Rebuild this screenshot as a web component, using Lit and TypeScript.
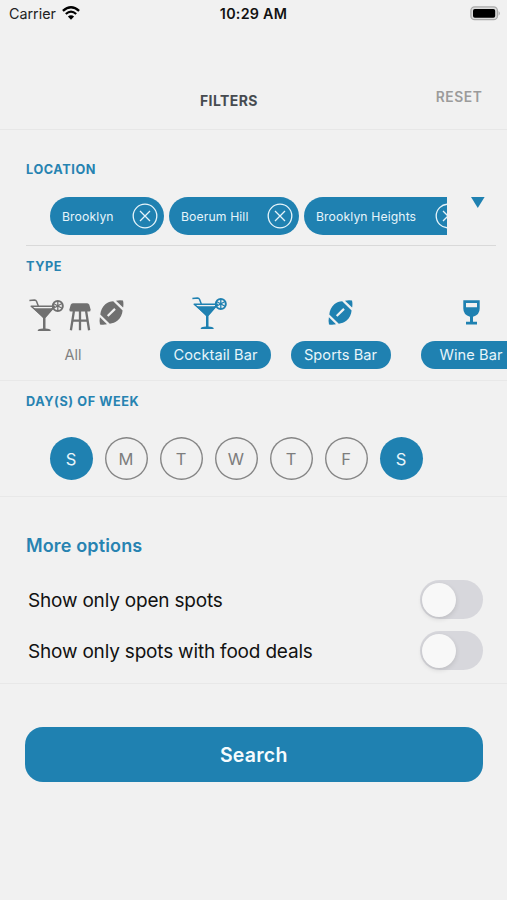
import { LitElement, html, css } from "lit";
import { customElement, property, state } from "lit/decorators.js";
import { classMap } from "lit/directives/class-map.js";

const cocktail = html`<svg class="icon" width="35" height="33" viewBox="0 0 35 33">
  <path d="M0.4 1.5 5.5 1Q7 1 7.6 2.5L9.3 7" fill="none" stroke="currentColor" stroke-width="1.5" />
  <path d="M2.2 7.2H25.4L15.3 18.5Z" fill="none" stroke="currentColor" stroke-width="1.5" stroke-linejoin="round" />
  <path d="M4 9.3H25L16.5 19V29.4Q20.8 29.7 21.6 31V32H8.8V31Q9.6 29.7 14 29.4V19Z" fill="currentColor" />
  <circle cx="28.8" cy="6.9" r="5" fill="none" stroke="currentColor" stroke-width="2" />
  <path d="M28.8 2V11.8M24.5 4.5 33 9.3M24.5 9.3 33 4.5" stroke="currentColor" stroke-width="1.3" />
</svg>`;

const football = html`<svg class="icon" width="25" height="25" viewBox="0 0 25 25">
  <path d="M17 0.7Q20.5 -0.1 24 0.5Q24.8 4 24.1 7.6Z" fill="currentColor" />
  <path d="M8 24.200Q4.500 25 1 24.400Q0.200 21 0.900 17.300Z" fill="currentColor" />
  <path d="M14.200 1.200 23.600 10.400C23.300 14 21.600 18 18.600 20.600C16.400 22.600 13.600 23.500 10.800 23.700L1.300 14.500C1.600 11 3.300 7 6.300 4.300C8.600 2.300 11.400 1.400 14.200 1.200Z" fill="currentColor" />
  <path d="M8.700 16 16 8.900" stroke="#f1f1f1" stroke-width="2.200" />
</svg>`;

const stool = html`<svg class="icon" width="22" height="28" viewBox="0 0 22 28">
  <path d="M3.800 0.200H18.200Q19.700 0.200 20.300 1.800L21.600 6.400Q21.800 8.600 20 8.600H2Q0.200 8.600 0.400 6.400L1.700 1.800Q2.300 0.200 3.800 0.200Z" fill="currentColor" />
  <path d="M4.900 8 1.900 27.300M17.100 8 20.100 27.300M11 8V27.300M3.600 17.700H18.400" fill="none" stroke="currentColor" stroke-width="2.300" />
</svg>`;

const wine = html`<svg class="icon" width="17" height="25" viewBox="0 0 17 25">
  <path fill-rule="evenodd" d="M0.300 0.300H16.700V8.500Q16.700 15 10 16.700V21.800H14V24.500H3V21.800H7V16.700Q0.300 15 0.300 8.500ZM3 3V7.200H14V3Z" fill="currentColor" />
</svg>`;

@customElement("location-chip")
class LocationChip extends LitElement {
  @property() label = "";

  static styles = css`
    :host {
      display: flex;
      flex: none;
      align-items: center;
      justify-content: space-between;
      box-sizing: border-box;
      height: 38px;
      padding: 0 6px 0 12px;
      border-radius: 19px;
      background: #1f81b1;
      color: #e6f4fa;
      font-size: 12.2px;
      letter-spacing: 0.12px;
    }
    .remove {
      display: block;
    }
  `;

  render() {
    return html`<span>${this.label}</span>
      <svg class="remove" width="26" height="26" viewBox="0 0 26 26" fill="none" stroke="currentColor" stroke-width="1.3">
        <circle cx="13" cy="13" r="11.800" />
        <path d="M8 8 18 18M18 8 8 18" />
      </svg>`;
  }
}

@customElement("toggle-switch")
class ToggleSwitch extends LitElement {
  @property({ type: Boolean }) on = false;

  static styles = css`
    .track {
      display: flex;
      box-sizing: border-box;
      width: 62.5px;
      height: 38.5px;
      padding: 2.25px;
      border-radius: 20px;
      background: #d7d7dc;
    }
    .track.on {
      justify-content: flex-end;
      background: #1f81b1;
    }
    .knob {
      width: 34px;
      height: 34px;
      border-radius: 50%;
      background: #f8f8f8;
      box-shadow: 0 2px 5px rgba(0, 0, 0, 0.12);
    }
  `;

  render() {
    return html`<div class=${classMap({ track: true, on: this.on })} @click=${() => (this.on = !this.on)}>
      <div class="knob"></div>
    </div>`;
  }
}

@customElement("app-root")
class AppRoot extends LitElement {
  @state() days = [true, false, false, false, false, false, true];

  static styles = css`
    :host {
      display: flex;
      flex-direction: column;
      box-sizing: border-box;
      width: 507px;
      height: 900px;
      overflow: hidden;
      background: #f1f1f1;
      color: #111;
      font-family: Inter, "Liberation Sans", sans-serif;
      white-space: nowrap;
    }
    .icon {
      display: block;
      flex: none;
    }
    .status {
      display: grid;
      grid-template-columns: 1fr auto 1fr;
      align-items: center;
      box-sizing: border-box;
      height: 28px;
      padding: 0 6px 2px 9px;
      font-size: 14.3px;
    }
    .carrier {
      display: flex;
      align-items: center;
      gap: 6px;
      color: #222;
    }
    .clock {
      margin-right: 3px;
      font-weight: 600;
      letter-spacing: 0.25px;
    }
    .battery {
      justify-self: end;
    }
    .header {
      display: flex;
      align-items: flex-start;
      justify-content: space-between;
      box-sizing: border-box;
      height: 102px;
      padding: 60px 24.5px 0 200px;
      border-bottom: 1px solid #e7e7e7;
      line-height: 18px;
    }
    .title {
      margin-top: 4px;
      font-size: 14px;
      font-weight: 700;
      letter-spacing: 0.4px;
      color: #464b50;
    }
    .reset {
      font-size: 13.8px;
      font-weight: 600;
      letter-spacing: 0.6px;
      color: #9b9b9b;
    }
    .section {
      box-sizing: border-box;
      border-bottom: 1px solid #e8e8e8;
    }
    .heading {
      margin-left: 26px;
      font-size: 12.7px;
      font-weight: 700;
      line-height: 18px;
      letter-spacing: 0.58px;
      color: #2783b1;
    }
    .location {
      height: 116px;
      padding-top: 31px;
      border: none;
    }
    .picker {
      display: flex;
      margin: 18px 11px 0 26px;
      padding: 0 12px 10px 24px;
      border-bottom: 1px solid #d9d9d9;
    }
    .chips {
      display: flex;
      flex: none;
      gap: 5px;
      width: 396.5px;
      overflow: hidden;
    }
    .first { width: 114px; }
    .second { width: 130px; }
    .third { width: 163px; }
    .arrow {
      margin-left: 24.5px;
    }
    .type {
      height: 135px;
      padding-top: 12px;
    }
    .types {
      display: flex;
      align-items: flex-start;
      overflow: hidden;
      padding-left: 29px;
      font-size: 14.6px;
      letter-spacing: 0.08px;
    }
    .kind {
      display: flex;
      flex: none;
      flex-direction: column;
      align-items: center;
      color: #1f81b1;
    }
    .all {
      width: 96px;
      align-items: flex-start;
      margin-right: 35px;
      color: #707070;
    }
    .art {
      display: flex;
      align-items: flex-start;
      height: 43.5px;
      margin-top: 21px;
      box-sizing: border-box;
    }
    .trio { padding-top: 2px; gap: 5px; }
    .trio .icon + .icon { margin-top: 3.500px; }
    .trio .icon + .icon + .icon { margin: 1px 0 0 3px; }
    .glass { margin-right: 12px; }
    .ball, .wine { padding-top: 3px; }
    .pill {
      box-sizing: border-box;
      height: 28.5px;
      border-radius: 14.25px;
      background: #1f81b1;
      color: #e8f5fa;
      line-height: 28px;
      text-align: center;
    }
    .w111 { width: 111px; }
    .w100 { width: 100px; }
    .sports { margin-left: 19.5px; }
    .winebar { margin-left: 30.5px; }
    .plain {
      align-self: center;
      margin-right: 8px;
      font-size: 14.4px;
      line-height: 28px;
      color: #808080;
    }
    .week {
      height: 116px;
      padding-top: 12px;
    }
    .days {
      display: flex;
      gap: 12px;
      margin: 26px 0 0 49.5px;
    }
    .day {
      display: flex;
      align-items: center;
      justify-content: center;
      box-sizing: border-box;
      width: 43px;
      height: 43px;
      border-radius: 50%;
      box-shadow: inset 0 0 0 1.4px #858585;
      font-size: 16.5px;
      color: #7d7d7d;
    }
    .day.on {
      box-shadow: none;
      background: #1f81b1;
      color: #e8f5fa;
    }
    .options {
      height: 187px;
      padding: 37px 24.5px 0 28px;
    }
    .more {
      margin: 0 0 22px -2px;
      font-size: 18px;
      font-weight: 600;
      line-height: 24px;
      letter-spacing: 0.15px;
      color: #2783b1;
    }
    .option {
      display: flex;
      align-items: center;
      justify-content: space-between;
      height: 39px;
      margin-bottom: 12px;
      font-size: 19px;
      letter-spacing: -0.19px;
    }
    .label {
      padding-top: 1px;
    }
    .search {
      flex: none;
      height: 55px;
      margin: 43px 24.5px 0 25px;
      border: none;
      padding: 0;
      border-radius: 18px;
      background: #1f81b1;
      color: #f5fbfd;
      font-family: inherit;
      font-size: 19.5px;
      font-weight: 600;
      letter-spacing: 0.25px;
    }
  `;

  toggleDay(index: number) {
    this.days = this.days.map((on, i) => (i === index ? !on : on));
  }

  render() {
    return html`
      <div class="status">
        <div class="carrier">
          <span>Carrier</span>
          <svg class="icon" width="18" height="14" viewBox="0 0 18 14" fill="none" stroke="#000">
            <path d="M0.900 4.800Q9 -2.200 17.100 4.800" stroke-width="2.400" />
            <path d="M3.800 8Q9 3.400 14.200 8" stroke-width="2.200" />
            <path d="M9 13.700 5.900 10.500Q9 8 12.100 10.500Z" fill="#000" stroke="none" />
          </svg>
        </div>
        <div class="clock">10:29 AM</div>
        <svg class="battery icon" width="31" height="15" viewBox="0 0 31 15">
          <rect x="0.900" y="0.900" width="26.500" height="12.800" rx="3.800" fill="#dcdcdc" stroke="#aaa" stroke-width="1.300" />
          <rect x="3" y="2.900" width="22.200" height="8.800" rx="1.800" fill="#000" />
          <path d="M28.600 4.900Q31 7.200 28.600 9.700Z" fill="#a5a5a5" />
        </svg>
      </div>
      <div class="header">
        <div class="title">FILTERS</div>
        <div class="reset">RESET</div>
      </div>
      <div class="section location">
        <div class="heading">LOCATION</div>
        <div class="picker">
          <div class="chips">
            <location-chip class="first" label="Brooklyn"></location-chip>
            <location-chip class="second" label="Boerum Hill"></location-chip>
            <location-chip class="third" label="Brooklyn Heights"></location-chip>
          </div>
          <svg class="arrow icon" width="14" height="11" viewBox="0 0 14 11">
            <path d="M0 0H13.600L6.800 11Z" fill="#1f81b1" />
          </svg>
        </div>
      </div>
      <div class="section type">
        <div class="heading">TYPE</div>
        <div class="types">
          <div class="kind all">
            <div class="art trio">${cocktail}${stool}${football}</div>
            <div class="plain">All</div>
          </div>
          <div class="kind">
            <div class="art glass">${cocktail}</div>
            <div class="pill w111">Cocktail Bar</div>
          </div>
          <div class="kind sports">
            <div class="art ball">${football}</div>
            <div class="pill w100">Sports Bar</div>
          </div>
          <div class="kind winebar">
            <div class="art wine">${wine}</div>
            <div class="pill w100">Wine Bar</div>
          </div>
        </div>
      </div>
      <div class="section week">
        <div class="heading">DAY(S) OF WEEK</div>
        <div class="days">
          ${["S", "M", "T", "W", "T", "F", "S"].map(
            (d, i) => html`<div class=${classMap({ day: true, on: this.days[i] })} @click=${() => this.toggleDay(i)}>${d}</div>`
          )}
        </div>
      </div>
      <div class="section options">
        <div class="more">More options</div>
        <div class="option"><span class="label">Show only open spots</span><toggle-switch></toggle-switch></div>
        <div class="option"><span class="label">Show only spots with food deals</span><toggle-switch></toggle-switch></div>
      </div>
      <button class="search">Search</button>
    `;
  }
}
